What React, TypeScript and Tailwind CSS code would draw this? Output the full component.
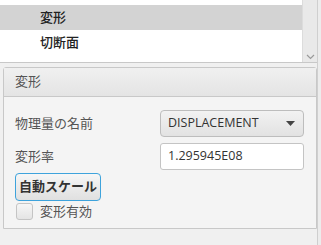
import React from "react";

export default function App() {
  const font = { fontFamily: '"Open Sans", "Noto Sans CJK JP", sans-serif' };
  return (
    <div className="w-[321px] h-[245px] flex bg-[#f0f0f0] overflow-hidden" style={font}>
      <div className="w-[317px] flex flex-col">
        <div className="h-[63px] flex border-b border-[#c8c8c8] bg-white">
          <div className="flex-1 pt-[5px] flex flex-col">
            <div className="h-[25px] bg-[#d3d3d3] pl-[40px] flex items-center text-[13px] text-[#222] font-medium">変形</div>
            <div className="h-[25px] pl-[40px] flex items-center text-[13px] text-[#222] font-medium">切断面</div>
          </div>
          <div className="w-[15px] bg-[#e9e9e9] border-l border-[#dcdcdc] flex flex-col justify-end items-center pb-[2px]">
            <svg width="9" height="6" viewBox="0 0 9 6">
              <path d="M1 1 L4.5 4.5 L8 1" fill="none" stroke="#9a9a9a" strokeWidth="1.2" />
            </svg>
          </div>
        </div>
        <div className="flex-1 pt-[4px] pl-[3px] flex flex-col">
          <div className="h-[162px] border border-[#c8c8c8] rounded-t-[3px] flex flex-col bg-[#f4f4f4]">
            <div className="h-[29px] bg-gradient-to-b from-[#f0f0f0] to-[#e4e4e4] border-b border-[#c8c8c8] pl-[11px] flex items-center text-[13px] text-[#555]">変形</div>
            <div className="flex flex-col pl-[11px] pr-[12px] pt-[13px]">
              <div className="flex items-center justify-between h-[27px]">
                <span className="text-[13px] text-[#555]">物理量の名前</span>
                <div className="w-[144px] h-[27px] rounded-[4px] border border-[#bdbdbd] bg-gradient-to-b from-[#f2f2f2] to-[#e2e2e2] flex items-center justify-between pl-[7px] pr-[8px] text-[12.5px] text-[#333]">
                  <span>DISPLACEMENT</span>
                  <svg width="9" height="5" viewBox="0 0 9 5"><path d="M0 0 L9 0 L4.5 5 Z" fill="#444" /></svg>
                </div>
              </div>
              <div className="flex items-center justify-between h-[27px] mt-[6px]">
                <span className="text-[13px] text-[#555]">変形率</span>
                <div className="w-[144px] h-[27px] rounded-[3px] border border-[#c4c4c4] bg-white flex items-center pl-[7px] text-[12.5px] text-[#333]">1.295945E08</div>
              </div>
              <div className="mt-[3px]">
                <div className="w-[86px] h-[28px] rounded-[4px] border-[1.5px] border-[#3ea3dc] bg-gradient-to-b from-[#f6f6f6] to-[#e0e0e0] flex items-center justify-center text-[13px] font-bold text-[#333]">自動スケール</div>
              </div>
              <div className="flex items-center mt-[1px] pl-[1px]">
                <div className="w-[17px] h-[17px] rounded-[3px] border border-[#c4c4c4] bg-gradient-to-b from-[#f6f6f6] to-[#e4e4e4]"></div>
                <span className="ml-[7px] text-[13px] text-[#555]">変形有効</span>
              </div>
            </div>
          </div>
        </div>
      </div>
      <div className="w-[4px] border-l border-[#cfcfcf] bg-[#ececec]"></div>
    </div>
  );
}
